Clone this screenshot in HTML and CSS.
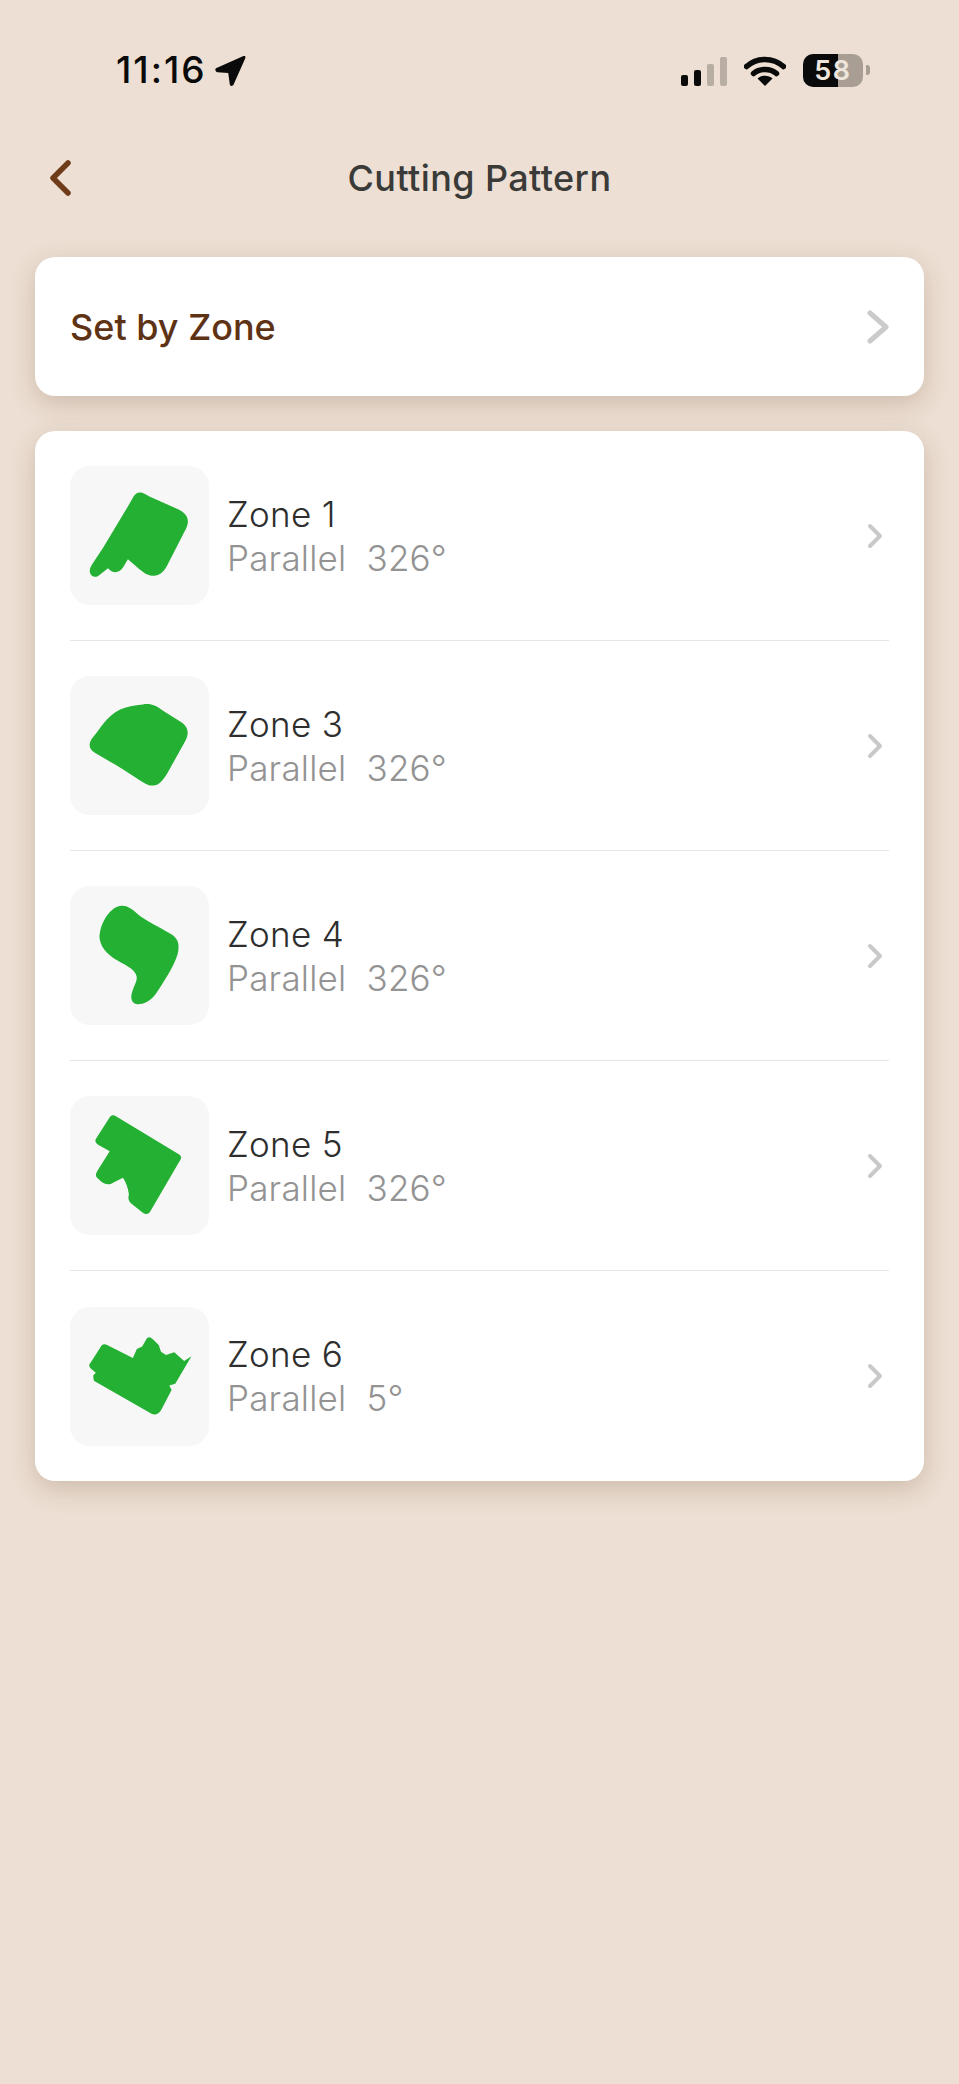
FILE: index.html
```html
<!DOCTYPE html>
<html lang="en">
<head>
<meta charset="utf-8">
<title>Cutting Pattern</title>
<link rel="stylesheet" href="styles.css">
</head>
<body>
<div class="status">
  <div class="status-left">
    <span class="time">11:16</span>
    <svg class="loc" viewBox="0 0 30 30"><path d="M1.500 12.500 27 1.200C29 .4 30 1.500 29.200 3.300L18 28.500C17 30.500 14.700 30.300 14.300 28.200L12.800 17.500 2.500 16.800C.2 16.500-.5 13.500 1.500 12.500z"/></svg>
  </div>
  <div class="status-right">
    <svg class="signal" viewBox="0 0 46 29">
      <rect x="0" y="18" width="7" height="11" rx="2"/>
      <rect x="13" y="13" width="7" height="16" rx="2"/>
      <rect class="dim" x="26" y="7" width="7" height="22" rx="2"/>
      <rect class="dim" x="39" y="0" width="7" height="29" rx="2"/>
    </svg>
    <svg class="wifi" viewBox="0 0 42 30">
      <path class="wave" d="M2.500 10.500C13 1 29 1 39.500 10.500"/>
      <path class="wave" d="M9.500 17.500C15.500 12 26.500 12 32.500 17.500"/>
      <path d="M21 30 13.500 22.500C17.500 18.800 24.500 18.800 28.500 22.500z"/>
    </svg>
    <div class="battery">
      <div class="battery-body"><span class="battery-level">58</span></div>
      <div class="battery-nub"></div>
    </div>
  </div>
</div>

<header class="nav">
  <svg class="back" viewBox="0 0 22 36"><path d="M19 3 4 18l15 15"/></svg>
  <h1 class="title">Cutting Pattern</h1>
</header>

<main class="content">
  <section class="card set-row">
    <span class="set-label">Set by Zone</span>
    <svg class="chev-lg" viewBox="0 0 22 34"><path d="M3 3l16 14L3 31"/></svg>
  </section>

  <section class="card">
    <div class="row">
      <div class="thumb"><svg viewBox="30 18 420 420"><path class="zone" d="M240 98C250 97 258 104 270 110L355 148C380 160 390 175 385 195 382 207 375 218 370 228L322 322C305 350 290 352 270 348 255 345 240 330 205 300L192 322C180 342 160 345 145 327L118 348C105 358 92 350 90 338 88 328 95 318 105 303L130 265 205 140 222 110C228 102 233 98 240 98z"/></svg></div>
      <div class="info"><div class="name">Zone 1</div><div class="meta">Parallel&nbsp; 326°</div></div>
      <svg class="chev-sm" viewBox="0 0 16 26"><path d="M3 3l10 10L3 23"/></svg>
    </div>
    <div class="row">
      <div class="thumb"><svg viewBox="30 48 420 420"><path class="zone" d="M180 150C200 140 225 137 250 134 275 130 290 138 310 152L370 190C388 205 390 222 378 245L325 340C305 375 290 382 268 378 250 372 200 335 170 318L105 280C85 268 85 250 100 232 120 210 140 170 180 150z"/></svg></div>
      <div class="info"><div class="name">Zone 3</div><div class="meta">Parallel&nbsp; 326°</div></div>
      <svg class="chev-sm" viewBox="0 0 16 26"><path d="M3 3l10 10L3 23"/></svg>
    </div>
    <div class="row">
      <div class="thumb"><svg viewBox="30 48 420 420"><path class="zone" d="M185 108C200 106 215 115 235 133 255 150 300 172 335 193 358 207 360 225 357 245 352 275 325 320 295 365 275 398 250 405 235 405 218 405 213 390 216 375 222 350 235 335 231 320 228 305 210 293 185 280 150 262 125 240 120 210 115 175 145 112 185 108z"/></svg></div>
      <div class="info"><div class="name">Zone 4</div><div class="meta">Parallel&nbsp; 326°</div></div>
      <svg class="chev-sm" viewBox="0 0 16 26"><path d="M3 3l10 10L3 23"/></svg>
    </div>
    <div class="row">
      <div class="thumb"><svg viewBox="30 48 420 420"><path class="zone" d="M150 112C156 105 162 105 170 110L360 225C367 230 367 235 364 240L272 398C266 407 258 406 250 401L214 372C206 365 205 355 208 345 205 325 200 310 190 295L160 310C148 318 135 315 125 307L115 298C106 290 108 282 112 275L150 215 115 195C105 188 105 182 110 175z"/></svg></div>
      <div class="info"><div class="name">Zone 5</div><div class="meta">Parallel&nbsp; 326°</div></div>
      <svg class="chev-sm" viewBox="0 0 16 26"><path d="M3 3l10 10L3 23"/></svg>
    </div>
    <div class="row">
      <div class="thumb"><svg viewBox="30 33 420 420"><path class="zone" d="M125 150C130 144 136 144 142 148L220 187 232 160 248 152 262 128C268 122 274 124 282 132L298 148 305 168 320 178 345 170 375 196 397 182 348 265 330 270 337 284 305 345C295 360 285 360 275 355L102 256 100 240 108 232 92 218C86 210 88 206 93 200z"/></svg></div>
      <div class="info"><div class="name">Zone 6</div><div class="meta">Parallel&nbsp; 5°</div></div>
      <svg class="chev-sm" viewBox="0 0 16 26"><path d="M3 3l10 10L3 23"/></svg>
    </div>
  </section>
</main>
</body>
</html>
```
FILE: styles.css
```css
* { box-sizing: border-box; }
html, body { margin: 0; padding: 0; }
body {
  min-height: 2084px;
  background: #eddfd3;
  font-family: Inter, "Liberation Sans", sans-serif;
  color: #333;
}

/* status bar */
.status {
  height: 132px;
  padding: 53px 89px 0 116px;
  display: flex;
  justify-content: space-between;
  align-items: flex-start;
}
.status-left { display: flex; align-items: center; gap: 8px; height: 34px; }
.time { font-size: 37px; font-weight: 500; line-height: 34px; color: #0a0a0a; letter-spacing: 2px; }
.loc { width: 31px; height: 31px; fill: #0a0a0a; }
.status-right { display: flex; align-items: center; height: 34px; }
.signal { width: 46px; height: 29px; fill: #0a0a0a; margin-top: 2px; margin-right: 17px; }
.signal .dim { fill: #b8aea4; }
.wifi { width: 42px; height: 30px; fill: #0a0a0a; margin-right: 17px; margin-top: 1px; }
.wifi .wave { fill: none; stroke: #0a0a0a; stroke-width: 5.5; stroke-linecap: round; }
.battery { display: flex; align-items: center; gap: 3px; }
.battery-body {
  width: 60px;
  height: 33px;
  border-radius: 10px;
  background: linear-gradient(90deg, #0a0a0a 0 58%, #a89e94 58% 100%);
  display: flex;
  align-items: center;
  justify-content: center;
}
.battery-level { color: #eee5dc; font-size: 27px; font-weight: 600; line-height: 33px; letter-spacing: 1.5px; }
.battery-nub { width: 4px; height: 10px; border-radius: 0 3px 3px 0; background: #a89e94; }

/* nav */
.nav {
  height: 92px;
  position: relative;
  display: flex;
  align-items: center;
  justify-content: center;
}
.back {
  position: absolute;
  left: 49px;
  top: 28px;
  width: 22px;
  height: 36px;
  fill: none;
  stroke: #6e3c18;
  stroke-width: 5.5;
  stroke-linecap: round;
  stroke-linejoin: round;
}
.title { margin: 0; font-size: 36px; font-weight: 500; line-height: 46px; letter-spacing: 0.4px; color: #3a3a38; }

/* cards */
.content {
  padding: 33px 35px 0;
  display: flex;
  flex-direction: column;
  gap: 35px;
}
.card {
  background: #fff;
  border-radius: 20px;
  box-shadow: 0 8px 26px rgba(95, 65, 35, 0.22);
}
.set-row {
  height: 139px;
  padding: 0 35px;
  display: flex;
  align-items: center;
  justify-content: space-between;
}
.set-label { font-size: 36px; font-weight: 500; color: #5e3214; line-height: 44px; }
.chev-lg { width: 22px; height: 34px; fill: none; stroke: #cbcbcb; stroke-width: 5; stroke-linecap: round; stroke-linejoin: round; }

.row {
  height: 210px;
  margin: 0 35px;
  display: flex;
  align-items: center;
  border-bottom: 1px solid #e6e6e6;
}
.row:last-child { border-bottom: 0; }
.thumb {
  width: 139px;
  height: 139px;
  flex: none;
  border-radius: 20px;
  background: #f7f7f7;
}
.thumb svg { display: block; width: 139px; height: 139px; }
.zone { fill: #23b033; }
.info { flex: 1; margin-left: 18px; }
.name { font-size: 35px; font-weight: 300; line-height: 44px; letter-spacing: 0.3px; color: #2e2e2e; }
.meta { font-size: 35px; font-weight: 300; line-height: 44px; letter-spacing: 0.2px; color: #939393; }
.chev-sm { width: 16px; height: 26px; margin-right: 6px; fill: none; stroke: #c9c9c9; stroke-width: 4; stroke-linecap: round; stroke-linejoin: round; }
```
